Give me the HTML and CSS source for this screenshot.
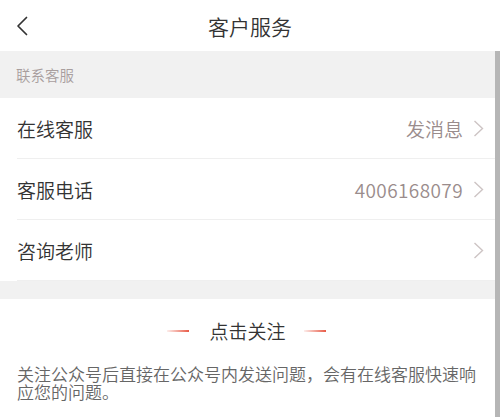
FILE: index.html
```html
<!DOCTYPE html>
<html lang="zh-CN">
<head>
<meta charset="utf-8">
<link rel="stylesheet" href="styles.css">
</head>
<body>
<div class="app">
  <header class="topbar">
    <span class="back">
      <svg width="12" height="20" viewBox="0 0 12 20"><path d="M10.5 1.5 L2 10 L10.5 18.5" fill="none" stroke="#333" stroke-width="1.7" stroke-linecap="round" stroke-linejoin="round"/></svg>
    </span>
    <h1 class="title">客户服务</h1>
  </header>
  <div class="body">
    <main class="content">
      <div class="section-label">联系客服</div>
      <ul class="list">
        <li class="row"><span class="row-title">在线客服</span><span class="row-value">发消息</span><span class="chev"><svg width="11" height="17" viewBox="0 0 11 17"><path d="M1.5 1 L9.5 8.5 L1.5 16" fill="none" stroke="#cdc4c4" stroke-width="1.4"/></svg></span></li>
        <li class="row"><span class="row-title">客服电话</span><span class="row-value num">4006168079</span><span class="chev"><svg width="11" height="17" viewBox="0 0 11 17"><path d="M1.5 1 L9.5 8.5 L1.5 16" fill="none" stroke="#cdc4c4" stroke-width="1.4"/></svg></span></li>
        <li class="row"><span class="row-title">咨询老师</span><span class="row-value"></span><span class="chev"><svg width="11" height="17" viewBox="0 0 11 17"><path d="M1.5 1 L9.5 8.5 L1.5 16" fill="none" stroke="#cdc4c4" stroke-width="1.4"/></svg></span></li>
      </ul>
      <div class="spacer"></div>
      <section class="follow">
        <div class="follow-head">
          <span class="line"></span>
          <span class="follow-title">点击关注</span>
          <span class="line"></span>
        </div>
        <p class="follow-text">关注公众号后直接在公众号内发送问题，会有在线客服快速响应您的问题。</p>
      </section>
    </main>
    <div class="scrollbar"></div>
  </div>
</div>
</body>
</html>
```

FILE: styles.css
```css
* { box-sizing: border-box; }
html, body {
  margin: 0;
  padding: 0;
  background: #fff;
  font-family: "Noto Sans CJK SC", "Noto Sans", sans-serif;
  font-weight: 350;
}
.app {
  width: 500px;
  height: 417px;
  display: flex;
  flex-direction: column;
  overflow: hidden;
}
.topbar {
  height: 51px;
  flex: none;
  display: flex;
  align-items: center;
  justify-content: center;
  position: relative;
  background: #fff;
}
.back {
  position: absolute;
  left: 16px;
  top: 16px;
  display: block;
  width: 12px;
  height: 20px;
}
.back svg { display: block; }
.title {
  margin: 0;
  font-size: 21px;
  font-weight: 350;
  color: #333;
  line-height: 28px;
}
.body {
  flex: 1;
  display: flex;
  min-height: 0;
}
.content {
  flex: 1;
  display: flex;
  flex-direction: column;
}
.scrollbar {
  width: 5px;
  flex: none;
  background: #b6b6b6;
}
.section-label {
  height: 47px;
  background: #f1f1f1;
  display: flex;
  align-items: center;
  padding-left: 16px;
  font-size: 14.5px;
  color: #a89e9e;
}
.list {
  list-style: none;
  margin: 0;
  padding: 0 0 0 17px;
  background: #fff;
}
.row {
  height: 61px;
  display: flex;
  align-items: center;
  border-bottom: 1px solid #efefef;
  padding-right: 11px;
}
.row-title {
  flex: 1;
  font-size: 19px;
  color: #333;
}
.row-value {
  font-size: 19px;
  color: #9a8c8c;
  margin-right: 10px;
}
.num {
  letter-spacing: 0.4px;
}
.chev {
  display: block;
  width: 11px;
  height: 17px;
}
.chev svg { display: block; }
.spacer {
  height: 18px;
  background: #f1f1f1;
}
.follow {
  background: #fff;
  padding: 19px 17px 0 17px;
}
.follow-head {
  display: flex;
  align-items: center;
  justify-content: center;
  gap: 20px;
}
.line {
  width: 22px;
  height: 2px;
  background: linear-gradient(to right, rgba(232, 90, 70, 0.1), #e85a46);
  margin-left: -2px;
}
.follow-title {
  font-size: 19px;
  color: #333;
  line-height: 26px;
}
.follow-text {
  margin: 21px 0 0 0;
  font-size: 17px;
  line-height: 18px;
  color: #666;
}
```
